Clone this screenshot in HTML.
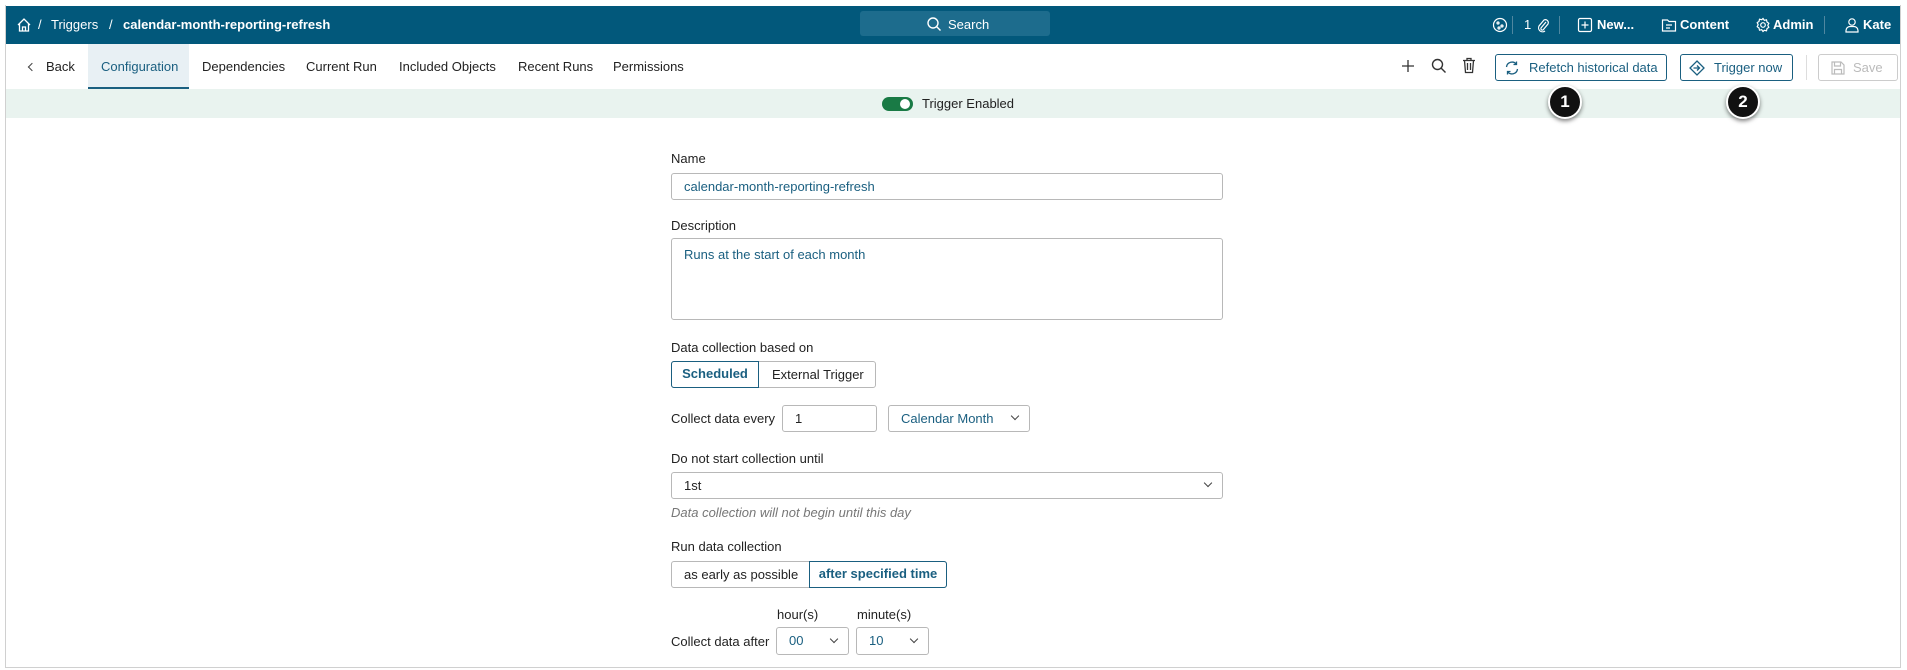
<!DOCTYPE html>
<html><head><meta charset="utf-8"><style>
*{box-sizing:border-box;margin:0;padding:0}
body{width:1907px;height:670px;background:#fff;font-family:"Liberation Sans",sans-serif;font-size:13px;color:#222;position:relative;overflow:hidden}
.a{position:absolute;white-space:nowrap}
.frame{position:absolute;left:5px;top:5px;width:1896px;height:663px;border:1px solid #d0d0d0;border-top:none}
.top{position:absolute;left:6px;top:6px;width:1894px;height:38px;background:#02587b;color:#fff}
.top .a{top:11px;font-size:13px}
.sep{position:absolute;top:10px;width:1px;height:18px;background:#4f87a0}
.tab{position:absolute;top:44px;height:45px;line-height:45px;font-size:13px;color:#222}
.btn{position:absolute;border:1px solid #1a5f80;border-radius:3px;color:#1a5f80;font-size:13px;line-height:25px;background:#fff}
.lbl{position:absolute;left:671px;font-size:13px;color:#222}
.inp{position:absolute;border:1px solid #b8b8b8;border-radius:3px;color:#1a5f80;font-size:13px;padding-left:12px;background:#fff}
.chev{position:absolute;width:6px;height:6px;border-right:1.4px solid #444;border-bottom:1.4px solid #444;transform:rotate(45deg)}
.badge{position:absolute;width:34px;height:34px;border-radius:50%;background:#111;border:2px solid #fff;color:#fff;font-weight:bold;font-size:17px;text-align:center;line-height:30px;box-shadow:0 2px 4px rgba(0,0,0,.5)}
</style></head><body>
<div class="frame"></div>
<div class="top">
 <svg class="a" style="left:10px;top:11px" width="16" height="16" viewBox="0 0 16 16" fill="none" stroke="#fff" stroke-width="1.3"><path d="M2 8L8 2l6 6M3.5 6.5V14h9V6.5M6.5 14v-4h3v4"/></svg>
 <span class="a" style="left:32px">/</span>
 <span class="a" style="left:45px">Triggers</span>
 <span class="a" style="left:103px">/</span>
 <span class="a" style="left:117px;font-weight:bold">calendar-month-reporting-refresh</span>
 <div class="a" style="left:854px;top:5px;width:190px;height:25px;background:#1d6c8d;border-radius:3px"></div>
 <svg class="a" style="left:920px;top:10px" width="16" height="16" viewBox="0 0 16 16" fill="none" stroke="#fff" stroke-width="1.4"><circle cx="7" cy="7" r="5"/><path d="M10.5 10.5L14.5 14.5"/></svg>
 <span class="a" style="left:942px">Search</span>
 <svg class="a" style="left:1486px;top:11px" width="16" height="16" viewBox="0 0 16 16" fill="none" stroke="#fff" stroke-width="1.2"><circle cx="8" cy="8" r="6.5"/><circle cx="6" cy="6" r="1"/><circle cx="10" cy="9" r="1"/><circle cx="7" cy="11" r="1"/></svg>
 <div class="sep" style="left:1506px"></div>
 <span class="a" style="left:1518px">1</span>
 <svg class="a" style="left:1530px;top:11px" width="14" height="16" viewBox="0 0 14 16" fill="none" stroke="#fff" stroke-width="1.2"><path d="M10 5L5 11a1.5 1.5 0 0 0 2 2l5-6a3 3 0 0 0-4-4L3 9a4 4 0 0 0 6 5"/></svg>
 <div class="sep" style="left:1553px"></div>
 <svg class="a" style="left:1571px;top:11px" width="16" height="16" viewBox="0 0 16 16" fill="none" stroke="#fff" stroke-width="1.2"><rect x="1.5" y="1.5" width="13" height="13" rx="1.5"/><path d="M8 4.5v7M4.5 8h7"/></svg>
 <span class="a" style="left:1591px;font-weight:bold">New...</span>
 <svg class="a" style="left:1655px;top:11px" width="16" height="16" viewBox="0 0 16 16" fill="none" stroke="#fff" stroke-width="1.2"><path d="M1.5 3h5l1.5 1.5h6.5v9.5h-13z"/><path d="M5 8h6M5 11h4"/></svg>
 <span class="a" style="left:1674px;font-weight:bold">Content</span>
 <svg class="a" style="left:1749px;top:11px" width="16" height="16" viewBox="0 0 16 16" fill="none" stroke="#fff" stroke-width="1.2"><circle cx="8" cy="8" r="2.3"/><path d="M8 1.5l1.3 1.8 2.2-.5.5 2.2 1.8 1.3-1 2 1 2-1.8 1.3-.5 2.2-2.2-.5L8 14.5l-1.3-1.8-2.2.5-.5-2.2-1.8-1.3 1-2-1-2 1.8-1.3.5-2.2 2.2.5z"/></svg>
 <span class="a" style="left:1767px;font-weight:bold">Admin</span>
 <div class="sep" style="left:1818px"></div>
 <svg class="a" style="left:1838px;top:11px" width="16" height="16" viewBox="0 0 16 16" fill="none" stroke="#fff" stroke-width="1.2"><circle cx="8" cy="5" r="3.2"/><path d="M2 15v-1.5a4 4 0 0 1 4-4h4a4 4 0 0 1 4 4V15z"/></svg>
 <span class="a" style="left:1857px;font-weight:bold">Kate</span>
</div>

<div class="chev" style="left:29px;top:64px;transform:rotate(135deg)"></div>
<span class="tab" style="left:46px">Back</span>
<div class="a" style="left:88px;top:44px;width:101px;height:45px;background:#e8f0f4;border-bottom:2px solid #1a5f80"></div>
<span class="tab" style="left:101px;color:#1a5f80">Configuration</span>
<span class="tab" style="left:202px">Dependencies</span>
<span class="tab" style="left:306px">Current Run</span>
<span class="tab" style="left:399px">Included Objects</span>
<span class="tab" style="left:518px">Recent Runs</span>
<span class="tab" style="left:613px">Permissions</span>

<svg class="a" style="left:1401px;top:59px" width="14" height="14" viewBox="0 0 14 14" stroke="#333" stroke-width="1.3"><path d="M7 1v12M1 7h12"/></svg>
<svg class="a" style="left:1431px;top:58px" width="16" height="16" viewBox="0 0 16 16" fill="none" stroke="#333" stroke-width="1.4"><circle cx="6.5" cy="6.5" r="5"/><path d="M10 10l4.5 4.5"/></svg>
<svg class="a" style="left:1462px;top:57px" width="14" height="17" viewBox="0 0 14 17" fill="none" stroke="#333" stroke-width="1.3"><path d="M1 3.5h12M5 3.5V1.5h4v2M2.5 3.5l1 12h7l1-12M5.5 6v7M8.5 6v7"/></svg>
<div class="btn" style="left:1495px;top:54px;width:172px;height:27px">
 <svg class="a" style="left:8px;top:5px" width="16" height="16" viewBox="0 0 16 16" fill="none" stroke="#1a5f80" stroke-width="1.3"><path d="M2.5 7a5.5 5.5 0 0 1 10-2.5M13.5 9a5.5 5.5 0 0 1-10 2.5M12.5 1.5v3h-3M3.5 14.5v-3h3"/></svg>
 <span class="a" style="left:33px;top:0">Refetch historical data</span></div>
<div class="btn" style="left:1680px;top:54px;width:113px;height:27px">
 <svg class="a" style="left:8px;top:5px" width="16" height="16" viewBox="0 0 16 16" fill="none" stroke="#1a5f80" stroke-width="1.3"><path d="M8 1l7 7-7 7-7-7z"/><path d="M4.5 8h6M8 5.5L10.5 8 8 10.5"/></svg>
 <span class="a" style="left:33px;top:0">Trigger now</span></div>
<div class="a" style="left:1806px;top:55px;width:1px;height:25px;background:#ddd"></div>
<div class="btn" style="left:1818px;top:54px;width:80px;height:27px;border-color:#ccc;color:#bbb">
 <svg class="a" style="left:12px;top:6px" width="14" height="14" viewBox="0 0 14 14" fill="none" stroke="#bbb" stroke-width="1.2"><path d="M1 1h9l3 3v9H1z M3.5 1v4h6V1 M3.5 13V8.5h7V13"/></svg>
 <span class="a" style="left:34px;top:0">Save</span></div>

<div class="a" style="left:6px;top:89px;width:1894px;height:29px;background:#e9f3ef"></div>
<div class="a" style="left:882px;top:97px;width:31px;height:14px;border-radius:7px;background:#197a45"></div>
<div class="a" style="left:900px;top:99px;width:10px;height:10px;border-radius:50%;background:#fff"></div>
<span class="a" style="left:922px;top:96px;font-size:13px">Trigger Enabled</span>
<div class="badge" style="left:1548px;top:85px">1</div>
<div class="badge" style="left:1726px;top:85px">2</div>

<span class="lbl" style="top:151px">Name</span>
<div class="inp" style="left:671px;top:173px;width:552px;height:27px;line-height:25px">calendar-month-reporting-refresh</div>
<span class="lbl" style="top:218px">Description</span>
<div class="inp" style="left:671px;top:238px;width:552px;height:82px;padding-top:8px">Runs at the start of each month</div>
<span class="lbl" style="top:340px">Data collection based on</span>
<div class="inp" style="left:671px;top:361px;width:205px;height:27px;padding:0"></div>
<div class="a" style="left:671px;top:361px;width:88px;height:27px;border:1.5px solid #1a5f80;border-radius:3px 0 0 3px;color:#1a5f80;font-weight:bold;line-height:24px;text-align:center">Scheduled</div>
<span class="a" style="left:772px;top:367px">External Trigger</span>

<span class="lbl" style="top:411px">Collect data every</span>
<div class="inp" style="left:782px;top:405px;width:95px;height:27px;line-height:25px;color:#222">1</div>
<div class="inp" style="left:888px;top:405px;width:142px;height:27px;line-height:25px">Calendar Month</div>
<div class="chev" style="left:1012px;top:413px"></div>

<span class="lbl" style="top:451px">Do not start collection until</span>
<div class="inp" style="left:671px;top:472px;width:552px;height:27px;line-height:25px;color:#222">1st</div>
<div class="chev" style="left:1205px;top:480px"></div>
<span class="lbl" style="top:505px;font-style:italic;color:#777">Data collection will not begin until this day</span>

<span class="lbl" style="top:539px">Run data collection</span>
<div class="inp" style="left:671px;top:561px;width:276px;height:27px;padding:0"></div>
<span class="a" style="left:684px;top:567px">as early as possible</span>
<div class="a" style="left:809px;top:561px;width:138px;height:27px;border:1.5px solid #1a5f80;border-radius:0 3px 3px 0;color:#1a5f80;font-weight:bold;line-height:24px;text-align:center">after specified time</div>

<span class="a" style="left:777px;top:607px">hour(s)</span>
<span class="a" style="left:857px;top:607px">minute(s)</span>
<span class="lbl" style="top:634px">Collect data after</span>
<div class="inp" style="left:776px;top:627px;width:73px;height:28px;line-height:26px">00</div>
<div class="chev" style="left:831px;top:636px"></div>
<div class="inp" style="left:856px;top:627px;width:73px;height:28px;line-height:26px">10</div>
<div class="chev" style="left:911px;top:636px"></div>
</body></html>
